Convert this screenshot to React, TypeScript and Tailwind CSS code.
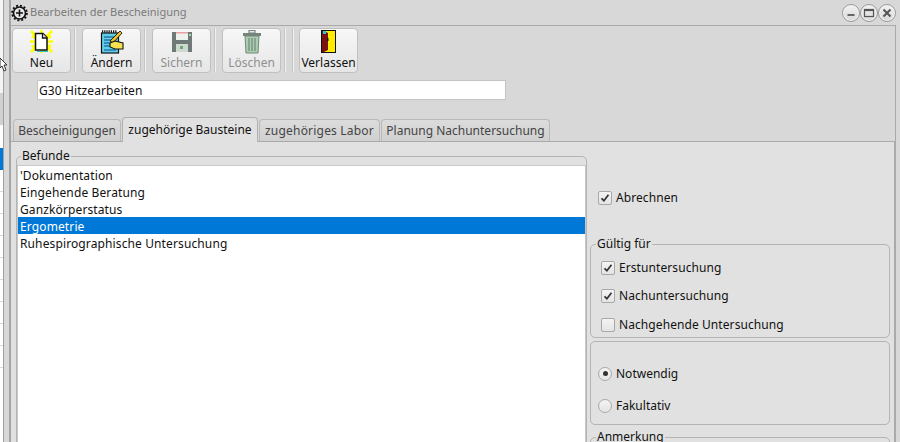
import type { ReactNode } from "react";

const font = "font-['Noto_Sans','Open_Sans',sans-serif]";

function GearIcon() {
  return (
    <svg width="17" height="18" viewBox="0 0 17 18">
      <circle cx="8.5" cy="9" r="6" fill="#e8e8e8" stroke="#111" strokeWidth="1.6" />
      <circle cx="8.5" cy="9" r="7.4" fill="none" stroke="#111" strokeWidth="1.8" strokeDasharray="2 1.9" />
      <path d="M8.5 5.5v7M5 9h7" stroke="#111" strokeWidth="1.6" />
    </svg>
  );
}

function NewIcon() {
  return (
    <svg width="24" height="24" viewBox="0 0 24 24">
      <path
        d="M11.5 11.5L1 1M11.5 11.5L22 1M11.5 11.5L1 22M11.5 11.5L22 22M11.5 11.5H0M11.5 11.5H23M11.5 11.5V0M11.5 11.5V23M11.5 11.5L2 6M11.5 11.5L21 6M11.5 11.5L2 17M11.5 11.5L21 17"
        stroke="#ffff00"
        strokeWidth="2.6"
      />
      <path d="M5.5 3.5h7.5l4 4v12.5h-11.5z" fill="#fff" stroke="#111" strokeWidth="1.5" />
      <path d="M12.5 3.5v4.5h4.5" fill="#e4e4e4" stroke="#111" strokeWidth="1.3" />
      <path d="M7 21.5h11" stroke="#33c4b8" strokeWidth="1" />
    </svg>
  );
}

function EditIcon() {
  return (
    <svg width="24" height="24" viewBox="0 0 24 24">
      <rect x="1.5" y="3" width="17" height="20" fill="#5fd0e8" stroke="#111" strokeWidth="1.2" />
      <path d="M2 1.5h15" stroke="#111" strokeWidth="2.4" strokeDasharray="1.2 1" />
      <path d="M4 7h10M4 10h7M4 13h6M4 16h7M4 20h12" stroke="#0a4a8a" strokeWidth="1" />
      <path d="M10 11l10-10 2 2-9 10z" fill="#f0c020" stroke="#111" strokeWidth="0.9" />
      <path d="M10 13l5-2 8 2v6h-8l-5-2z" fill="#f5e050" stroke="#111" strokeWidth="1.1" />
    </svg>
  );
}

function SaveIcon() {
  return (
    <svg width="22" height="22" viewBox="0 0 22 22">
      <path d="M1 1h20v20h-20z" fill="#6f7a78" />
      <rect x="5" y="1" width="12" height="8" fill="#eef2ee" />
      <rect x="5" y="1" width="12" height="1.5" fill="#e8a0a0" />
      <rect x="18" y="3" width="2" height="2" fill="#a8d8a8" />
      <rect x="5" y="13" width="12" height="8" fill="#cfd8d0" />
      <rect x="9" y="15" width="3" height="3" fill="#6aa878" />
    </svg>
  );
}

function TrashIcon() {
  return (
    <svg width="20" height="24" viewBox="0 0 20 24">
      <rect x="7" y="0.5" width="6" height="2.5" fill="none" stroke="#7c8a80" strokeWidth="1.2" />
      <rect x="1" y="3" width="18" height="3" fill="#76857c" />
      <path d="M3 6h14l-1 17h-12z" fill="#a8d0b0" stroke="#76857c" strokeWidth="1" />
      <path d="M7 8v13M10 8v13M13 8v13" stroke="#76857c" strokeWidth="1.2" />
    </svg>
  );
}

function DoorIcon() {
  return (
    <svg width="15" height="23" viewBox="0 0 15 23">
      <rect x="0" y="0" width="15" height="23" fill="#111" />
      <rect x="1" y="1" width="13" height="21" fill="#ffec00" />
      <path d="M1 1h2l4 2v17l-4 2h-2z" fill="#7a1010" />
      <rect x="2" y="1" width="3" height="3" fill="#29c5d8" />
      <rect x="6" y="8" width="1.5" height="3" fill="#111" />
    </svg>
  );
}

function ToolButton({ label, icon, disabled }: { label: string; icon: ReactNode; disabled?: boolean }) {
  return (
    <div className={`flex h-[45px] w-[59px] flex-col items-center rounded-[4px] border border-[#c0c0c0] bg-gradient-to-b from-[#f7f7f7] to-[#e6e6e6] ${disabled ? "text-[#8f8f8f]" : "text-[#111]"}`}>
      <div className="flex h-[25px] items-center justify-center pt-px">{icon}</div>
      <span className="text-[12px] leading-[17px]">{label}</span>
    </div>
  );
}

function Separator({ className }: { className: string }) {
  return <div className={`h-[44px] w-[2px] border-l border-r border-l-[#c6c6c6] border-r-[#f0f0f0] ${className}`} />;
}

function Tab({ label, active, className }: { label: string; active?: boolean; className: string }) {
  if (active) {
    return (
      <div className={`relative z-10 -mb-px flex h-[25px] items-center justify-center rounded-t-[4px] border border-b-0 border-[#b0b0b0] bg-[#e1e1e1] text-[#111] ${className}`}>
        {label}
      </div>
    );
  }
  return (
    <div className={`flex h-[22px] items-center justify-center rounded-t-[4px] border border-b-0 border-[#b8b8b8] bg-gradient-to-b from-[#dcdcdc] to-[#d0d0d0] text-[#444] ${className}`}>
      {label}
    </div>
  );
}

function Group({ legend, legendClass, className, children }: { legend?: string; legendClass?: string; className: string; children?: ReactNode }) {
  return (
    <div className={`relative rounded-[5px] border border-[#b4b4b4] ${className}`}>
      {legend && (
        <span className={`absolute -top-[9px] bg-[#e1e1e1] px-px text-[12px] leading-[16px] text-[#111] ${legendClass ?? "left-[5px]"}`}>{legend}</span>
      )}
      {children}
    </div>
  );
}

function CheckBox({ label, checked, className }: { label: string; checked?: boolean; className?: string }) {
  return (
    <div className={`flex items-center gap-[4px] text-[#111] ${className ?? ""}`}>
      <div className="flex h-[14px] w-[14px] items-center justify-center rounded-[2px] border border-[#a8a8a8] bg-gradient-to-b from-[#f4f4f4] to-[#e4e4e4]">
        {checked && (
          <svg width="10" height="10" viewBox="0 0 10 10">
            <path d="M1.5 5.3l2.4 2.4 4.6-6" fill="none" stroke="#333" strokeWidth="1.7" />
          </svg>
        )}
      </div>
      <span className="leading-[17px] tracking-[0.08px]">{label}</span>
    </div>
  );
}

function Radio({ label, checked, className }: { label: string; checked?: boolean; className?: string }) {
  return (
    <div className={`flex items-center gap-[4px] text-[#111] ${className ?? ""}`}>
      <div className="flex h-[14px] w-[14px] items-center justify-center rounded-full border border-[#a8a8a8] bg-gradient-to-b from-[#f4f4f4] to-[#e4e4e4]">
        {checked && <div className="h-[5px] w-[5px] rounded-full bg-[#333]" />}
      </div>
      <span className="leading-[17px]">{label}</span>
    </div>
  );
}

function WinButton({ children }: { children: ReactNode }) {
  return (
    <div className="flex h-[18px] w-[18px] items-center justify-center rounded-full border border-[#9a9a9a] bg-gradient-to-b from-[#f2f2f2] to-[#d8d8d8] shadow-[inset_0_0_0_1px_#f4f4f4]">
      <svg width="12" height="12" viewBox="0 0 12 12">{children}</svg>
    </div>
  );
}

const befunde = ["'Dokumentation", "Eingehende Beratung", "Ganzkörperstatus", "Ergometrie", "Ruhespirographische Untersuchung"];

export default function App() {
  return (
    <div className={`relative flex h-[442px] w-[900px] overflow-hidden bg-[#d8d8d8] text-[12px] ${font}`}>
      {/* table of the window behind */}
      <div className="flex w-[9px] shrink-0">
        <div className="flex w-[3px] flex-col bg-white">
          <div className="h-[93px] bg-[#f4f4f4]" />
          <div className="h-[32px] bg-[#d0d0d0]" />
          <div className="h-[23px] bg-white" />
          <div className="h-[22px] bg-[#0078d7]" />
          <div className="h-[22px] border-b border-[#d8d8d8]" />
          <div className="h-[22px] border-b border-[#d8d8d8]" />
          <div className="h-[22px] border-b border-[#d8d8d8]" />
          <div className="h-[22px] border-b border-[#d8d8d8]" />
          <div className="h-[22px] border-b border-[#d8d8d8]" />
          <div className="h-[22px] border-b border-[#d8d8d8]" />
          <div className="h-[22px] border-b border-[#d8d8d8]" />
          <div className="h-[22px] border-b border-[#d8d8d8]" />
          <div className="h-[22px] border-b border-[#d8d8d8]" />
        </div>
        <div className="flex-1 border-l border-[#a0a0a0] bg-[#d8d8d8]" />
      </div>

      <div className="flex min-w-0 flex-1 flex-col border-l-2 border-[#a4a4a4]">
        {/* title bar */}
        <div className="flex h-[25px] shrink-0 items-center justify-between pr-[4px]">
          <div className="flex items-center gap-[2px] text-[#7a7a7a]">
            <GearIcon />
            <span className="text-[11px]">Bearbeiten der Bescheinigung</span>
          </div>
          <div className="flex items-center">
            <WinButton>
              <path d="M2.5 8h7" stroke="#666" strokeWidth="2" />
            </WinButton>
            <WinButton>
              <rect x="1.5" y="2.5" width="9" height="7" fill="none" stroke="#555" strokeWidth="1.2" />
              <path d="M1.5 3.3h9" stroke="#555" strokeWidth="1.6" />
            </WinButton>
            <WinButton>
              <path d="M2.5 2.5l7 7M9.5 2.5l-7 7" stroke="#555" strokeWidth="2" />
            </WinButton>
          </div>
        </div>

        <div className="mr-[4px] flex min-h-0 flex-1 flex-col border-r border-t border-[#aaaaaa] bg-[#d8d8d8]">
          {/* toolbar */}
          <div className="flex h-[47px] shrink-0 items-center pl-[1px] pt-px">
            <ToolButton label="Neu" icon={<NewIcon />} />
            <Separator className="ml-[3px] mr-[6px]" />
            <ToolButton label="Ändern" icon={<EditIcon />} />
            <Separator className="ml-[3px] mr-[6px]" />
            <ToolButton label="Sichern" icon={<SaveIcon />} disabled />
            <Separator className="ml-[3px] mr-[6px]" />
            <ToolButton label="Löschen" icon={<TrashIcon />} disabled />
            <Separator className="ml-[3px] mr-[6px]" />
            <Separator className="mr-[5px]" />
            <ToolButton label="Verlassen" icon={<DoorIcon />} />
          </div>

          {/* title input */}
          <div className="ml-[26px] mt-[7px] flex h-[20px] w-[469px] shrink-0 items-center border border-[#c4c4c4] bg-white pl-[1px] pt-[2px] tracking-[0.1px] text-[#111]">
            G30 Hitzearbeiten
          </div>

          {/* tabs */}
          <div className="mt-[16px] flex h-[25px] shrink-0 items-end gap-[1px] pl-[2px]">
            <Tab label="Bescheinigungen" className="w-[108px]" />
            <Tab label="zugehörige Bausteine" className="w-[136px]" active />
            <Tab label="zugehöriges Labor" className="w-[121px] tracking-[0.2px]" />
            <Tab label="Planung Nachuntersuchung" className="w-[169px]" />
          </div>

          {/* panel */}
          <div className="flex min-h-0 flex-1 gap-[3px] border-r border-t border-[#aaaaaa] bg-[#e1e1e1] pl-[5px] pr-[3px] pt-[14px]">
            <Group legend="Befunde" legendClass="left-[4px]" className="h-[300px] w-[571px] shrink-0 pt-[8px]">
              <div className="h-full border border-[#c8c8c8] bg-white tracking-[0.12px] text-[#111]">
                {befunde.map((item) => (
                  <div
                    key={item}
                    className={`h-[17px] pl-[2px] pt-px leading-[17px] ${item === "Ergometrie" ? "bg-[#0078d7] text-white" : ""}`}
                  >
                    {item}
                  </div>
                ))}
              </div>
            </Group>

            <div className="flex w-[300px] flex-col">
              <div className="h-[88px] shrink-0 pl-[8px] pt-[33px]">
                <CheckBox label="Abrechnen" checked />
              </div>
              <Group legend="Gültig für" className="h-[94px] shrink-0 pl-[10px] pt-[14px]">
                <CheckBox label="Erstuntersuchung" checked />
                <CheckBox label="Nachuntersuchung" checked className="mt-[11px]" />
                <CheckBox label="Nachgehende Untersuchung" className="mt-[12px]" />
              </Group>
              <Group className="mt-[3px] h-[84px] shrink-0 pl-[7px] pt-[23px]">
                <Radio label="Notwendig" checked />
                <Radio label="Fakultativ" className="mt-[15px]" />
              </Group>
              <Group legend="Anmerkung" className="mt-[12px] h-[60px] shrink-0" />
            </div>
          </div>
        </div>
      </div>

      {/* mouse cursor left over the window edge */}
      <svg className="absolute left-0 top-[57px]" width="9" height="16" viewBox="0 0 9 16">
        <path d="M0 1l7 7h-3l2 5-2 1-2-5-2 2z" fill="#fff" stroke="#333" strokeWidth="1" />
      </svg>
    </div>
  );
}
